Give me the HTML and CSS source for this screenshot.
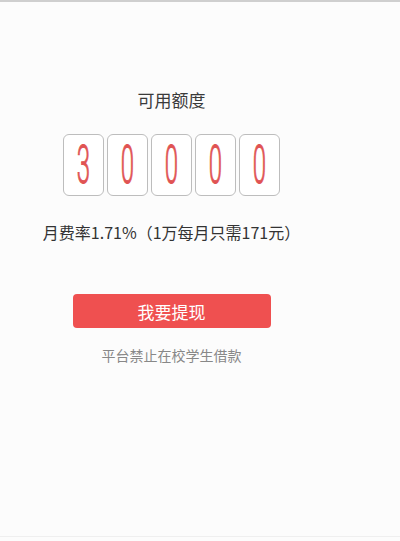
FILE: index.html
```html
<!DOCTYPE html>
<html lang="zh-CN">
<head>
<meta charset="utf-8">
<title>可用额度</title>
<link rel="stylesheet" href="styles.css">
</head>
<body>
<div class="page">
  <div class="content">
    <div class="title">可用额度</div>
    <div class="digits">
      <div class="digit"><span>3</span></div>
      <div class="digit"><span>0</span></div>
      <div class="digit"><span>0</span></div>
      <div class="digit"><span>0</span></div>
      <div class="digit"><span>0</span></div>
    </div>
    <div class="rate">月费率1.71%（1万每月只需171元）</div>
    <button class="btn">我要提现</button>
    <div class="note">平台禁止在校学生借款</div>
  </div>
</div>
</body>
</html>
```

FILE: styles.css
```css
html, body {
  margin: 0;
  padding: 0;
}
body {
  background: #fcfcfc;
  font-family: "Noto Sans CJK SC", "Noto Sans", sans-serif;
}
.page {
  box-sizing: border-box;
  border-top: 2px solid #cfcfcf;
  border-bottom: 1px solid #efefef;
  height: 537px;
}
.content {
  width: 343px;
  display: flex;
  flex-direction: column;
  align-items: center;
  padding-top: 88px;
}
.title {
  font-size: 17px;
  line-height: 20px;
  color: #3a3a3a;
}
.digits {
  display: flex;
  gap: 3px;
  margin-top: 24px;
}
.digit {
  width: 39px;
  height: 60px;
  border: 1px solid #bdbdbd;
  border-radius: 6px;
  background: #fff;
  display: flex;
  align-items: center;
  justify-content: center;
  overflow: hidden;
}
.digit span {
  display: block;
  font-family: Roboto, "Liberation Sans", sans-serif;
  font-size: 48px;
  font-weight: 300;
  line-height: 1;
  color: #e05353;
  -webkit-text-stroke: 0.9px #e05353;
  transform: scale(0.5, 1.12);
}
.rate {
  margin-top: 26px;
  font-size: 16px;
  line-height: 20px;
  color: #333;
}
.btn {
  margin-top: 52px;
  width: 198px;
  height: 34px;
  border: none;
  border-radius: 4px;
  background: #ef5050;
  color: #fff;
  font-family: "Noto Sans CJK SC", sans-serif;
  font-size: 17px;
  padding: 0;
}
.note {
  margin-top: 18px;
  font-size: 14px;
  line-height: 18px;
  color: #888;
}
```
